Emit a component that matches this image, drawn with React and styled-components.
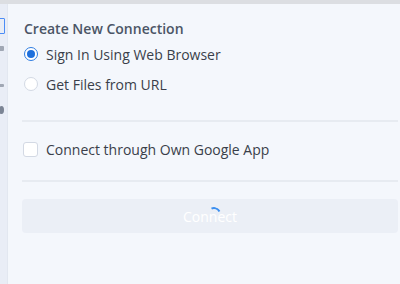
import React from 'react';
import styled, { createGlobalStyle } from 'styled-components';

const GlobalStyle = createGlobalStyle`
    html, body {
        margin: 0;
        padding: 0;
        background: #f4f7fc;
    }
    body {
        font-family: "Open Sans", "Noto Sans", sans-serif;
    }
`;

const Window = styled.div`
    width: 400px;
    height: 284px;
    display: flex;
    flex-direction: column;
    overflow: hidden;
`;

const TopBar = styled.div`
    height: 4px;
    background: #dcdee2;
    flex-shrink: 0;
`;

const Body = styled.div`
    flex: 1;
    display: flex;
`;

const Sidebar = styled.div`
    width: 7px;
    background: #e9edf6;
    border-right: 1px solid #e2e7f0;
    display: flex;
    flex-direction: column;
    align-items: flex-start;
    padding-top: 14px;
    overflow: hidden;
`;

const SideIcon = styled.div`
    width: ${({ w }) => w || 5}px;
    height: ${({ h }) => h || 6}px;
    margin-top: ${({ top }) => top || 0}px;
    margin-left: -1px;
    box-sizing: border-box;
    border-radius: ${({ round }) => (round ? '50%' : '1px')};
    background: ${({ outline }) => (outline ? 'transparent' : '#6f7889')};
    border: ${({ outline }) => (outline ? '1px solid #3b82f6' : 'none')};
    opacity: ${({ faint }) => (faint ? 0.6 : 0.9)};
`;

const Panel = styled.div`
    flex: 1;
    padding: 15px 2px 0 14px;
    display: flex;
    flex-direction: column;
`;

const Title = styled.h2`
    margin: 0 0 0 2px;
    font-size: 14px;
    font-weight: 600;
    color: #4b5566;
    line-height: 20px;
`;

const OptionList = styled.div`
    display: flex;
    flex-direction: column;
    gap: 10px;
    margin-top: 5px;
    padding-bottom: 26px;
`;

const OptionRow = styled.label`
    display: flex;
    align-items: center;
    gap: 8px;
    height: 20px;
    padding-left: 1px;
    font-size: 14px;
    color: #3a3f4a;
`;

const Radio = styled.span`
    width: 14px;
    height: 14px;
    box-sizing: border-box;
    border-radius: 50%;
    border: 1px solid ${({ checked }) => (checked ? '#2f7de1' : '#d3d9e4')};
    background: #fff;
    display: flex;
    align-items: center;
    justify-content: center;
    margin-left: 1px;

    &::after {
        content: '';
        width: 8px;
        height: 8px;
        border-radius: 50%;
        background: ${({ checked }) => (checked ? '#1d6fdc' : 'transparent')};
    }
`;

const Divider = styled.hr`
    margin: 0;
    border: none;
    border-top: 2px solid #e7ebf1;
`;

const CheckSection = styled.div`
    padding: 17px 0 21px;
`;

const Checkbox = styled.span`
    width: 15px;
    height: 15px;
    box-sizing: border-box;
    border-radius: 3px;
    border: 1px solid #d3d9e4;
    background: #fff;
`;

const ButtonArea = styled.div`
    padding-top: 17px;
`;

const ConnectButton = styled.button`
    position: relative;
    width: 100%;
    height: 34px;
    border: none;
    border-radius: 4px;
    background: #ebeff6;
    color: #ffffff;
    font-family: inherit;
    font-size: 14px;
    padding: 0;
    cursor: default;
`;

const Spinner = styled.span`
    position: absolute;
    left: 50%;
    top: 50%;
    width: 14px;
    height: 14px;
    margin: -9px 0 0 -3px;
    border-radius: 50%;
    border: 2px solid transparent;
    border-top-color: #3b8ff0;
    box-sizing: border-box;
    transform: rotate(20deg);
`;

export default function App() {
    return (
        <>
            <GlobalStyle />
            <Window>
                <TopBar />
                <Body>
                    <Sidebar>
                        <SideIcon outline w={6} h={16} />
                        <SideIcon top={12} h={5} faint />
                        <SideIcon top={33} h={3} faint />
                        <SideIcon top={19} h={8} round />
                    </Sidebar>
                    <Panel>
                        <Title>Create New Connection</Title>
                        <OptionList>
                            <OptionRow>
                                <Radio checked />
                                Sign In Using Web Browser
                            </OptionRow>
                            <OptionRow>
                                <Radio />
                                Get Files from URL
                            </OptionRow>
                        </OptionList>
                        <Divider />
                        <CheckSection>
                            <OptionRow>
                                <Checkbox />
                                Connect through Own Google App
                            </OptionRow>
                        </CheckSection>
                        <Divider />
                        <ButtonArea>
                            <ConnectButton disabled>
                                <Spinner />
                                Connect
                            </ConnectButton>
                        </ButtonArea>
                    </Panel>
                </Body>
            </Window>
        </>
    );
}
